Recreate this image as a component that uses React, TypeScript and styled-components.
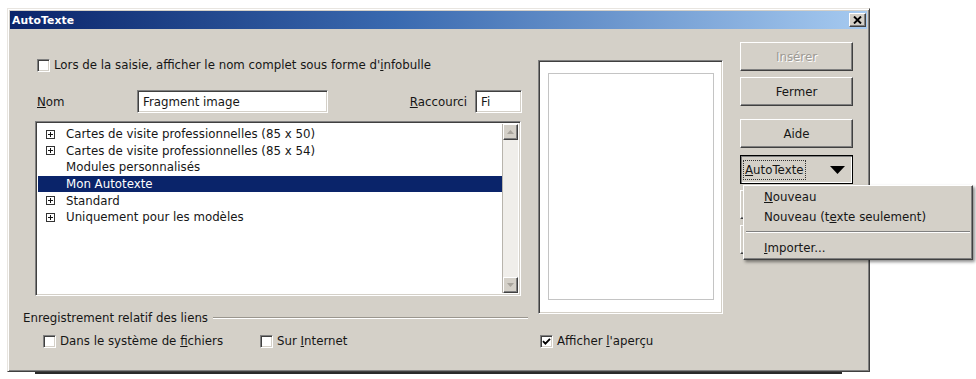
import React from 'react';
import styled, { createGlobalStyle, css } from 'styled-components';

const FACE = '#d4d0c8';
const FONT = `"DejaVu Sans", "Liberation Sans", Verdana, sans-serif`;

const GlobalStyle = createGlobalStyle`
  html, body { margin: 0; padding: 0; background: #fff; }
  body { font-family: ${FONT}; font-size: 11.8px; color: #161616; }
  * { box-sizing: border-box; }
`;

const raised = css`
  border: 1px solid;
  border-color: #fff #404040 #404040 #fff;
  box-shadow: inset -1px -1px #808080, inset 1px 1px ${FACE};
`;

const sunken = css`
  border: 1px solid;
  border-color: #808080 #fff #fff #808080;
  box-shadow: inset 1px 1px #404040, inset -1px -1px ${FACE};
`;

const Page = styled.div`
  width: 976px;
  height: 379px;
  overflow: hidden;
  padding: 8px 0 0 7px;
`;

const Window = styled.div`
  position: relative;
  width: 863px;
  height: 364px;
  background: ${FACE};
  border: 1px solid;
  border-color: #e8e5e0 #404040 #404040 #e8e5e0;
  box-shadow: inset 1px 1px #fff, inset -1px -1px #808080;
  padding: 2px;
  display: flex;
  flex-direction: column;
`;

const BehindEdge = styled.div`
  margin-left: 28px;
  width: 807px;
  height: 2px;
  background: #2a2a2a;
`;

const TitleBar = styled.div`
  height: 18px;
  display: flex;
  align-items: center;
  justify-content: space-between;
  padding: 0 1px 0 2px;
  background: linear-gradient(to right, #0a246a 0%, #3a6ab0 45%, #a6caf0 100%);
`;

const TitleText = styled.span`
  color: #fff;
  font-weight: bold;
  font-size: 10.8px;
  letter-spacing: 0.1px;
`;

const CloseButton = styled.div`
  width: 17px;
  height: 14px;
  background: ${FACE};
  ${raised};
  display: flex;
  align-items: center;
  justify-content: center;
`;

const Body = styled.div`
  flex: 1;
  display: flex;
  padding-left: 13px;
`;

const LeftCol = styled.div`
  width: 507px;
  padding-top: 29px;
  display: flex;
  flex-direction: column;
`;

const PreviewCol = styled.div`
  width: 185px;
  margin-left: 8px;
  padding-top: 31px;
  display: flex;
  flex-direction: column;
`;

const ButtonCol = styled.div`
  width: 113px;
  margin-left: 17px;
  padding-top: 13px;
  display: flex;
  flex-direction: column;
`;

const OptionRow = styled.div<{ $indent?: number; $top?: number }>`
  display: flex;
  align-items: center;
  height: 14px;
  margin-left: ${(p) => p.$indent ?? 0}px;
  margin-top: ${(p) => p.$top ?? 0}px;
`;

const Option = styled.label<{ $width?: number }>`
  display: flex;
  align-items: center;
  gap: 4px;
  width: ${(p) => (p.$width ? `${p.$width}px` : 'auto')};
  white-space: nowrap;
  line-height: 14px;
`;

const Box = styled.span`
  width: 13px;
  height: 13px;
  background: #fff;
  ${sunken};
  display: flex;
  align-items: center;
  justify-content: center;
  flex: none;
`;

const Key = styled.span`
  text-decoration: underline;
  text-underline-offset: 1px;
`;

const FieldRow = styled.div`
  margin: 18px 0 0 14px;
  width: 485px;
  height: 23px;
  display: flex;
  align-items: center;
`;

const FieldLabel = styled.span<{ $width?: number }>`
  width: ${(p) => (p.$width ? `${p.$width}px` : 'auto')};
  margin-right: ${(p) => (p.$width ? 0 : 8)}px;
  white-space: nowrap;
`;

const Spacer = styled.div`
  flex: 1;
`;

const TextInput = styled.div<{ $width: number }>`
  width: ${(p) => p.$width}px;
  height: 23px;
  background: #fff;
  ${sunken};
  padding: 0 5px;
  display: flex;
  align-items: center;
  white-space: nowrap;
`;

const ListBox = styled.div`
  margin: 8px 0 0 12px;
  width: 486px;
  height: 175px;
  background: #fff;
  ${sunken};
  padding: 2px;
  display: flex;
`;

const ListItems = styled.div`
  flex: 1;
  padding-top: 2px;
  display: flex;
  flex-direction: column;
`;

const ListItem = styled.div<{ $selected?: boolean }>`
  height: 16.6px;
  display: flex;
  align-items: center;
  white-space: nowrap;
  background: ${(p) => (p.$selected ? '#0a246a' : 'transparent')};
  color: ${(p) => (p.$selected ? '#fff' : 'inherit')};
`;

const ExpanderSlot = styled.span`
  width: 28px;
  flex: none;
  display: flex;
  align-items: center;
  padding-left: 8px;
`;

const Scrollbar = styled.div`
  width: 16px;
  display: flex;
  flex-direction: column;
  background: #f0eeea;
  border-left: 1px solid #b8b4ac;
`;

const ScrollArrow = styled.div`
  height: 16px;
  background: ${FACE};
  ${raised};
  display: flex;
  align-items: center;
  justify-content: center;
`;

const ScrollTrack = styled.div`
  flex: 1;
`;

const GroupHeader = styled.div`
  margin-top: 15px;
  width: 505px;
  height: 14px;
  display: flex;
  align-items: center;
  gap: 5px;
  white-space: nowrap;
`;

const EtchedLine = styled.div`
  flex: 1;
  height: 2px;
  border-top: 1px solid #9a968e;
  border-bottom: 1px solid #fff;
`;

const PreviewBox = styled.div`
  height: 254px;
  background: #fff;
  ${sunken};
  padding: 12px 8px 13px 9px;
  display: flex;
`;

const PreviewPage = styled.div`
  flex: 1;
  border: 1px solid #c4c4c4;
`;

const Button = styled.div<{ $top?: number; $disabled?: boolean }>`
  height: 29px;
  margin-top: ${(p) => p.$top ?? 0}px;
  background: ${FACE};
  ${raised};
  display: flex;
  align-items: center;
  justify-content: center;
  color: ${(p) => (p.$disabled ? '#9d9a94' : '#161616')};
  text-shadow: ${(p) => (p.$disabled ? '1px 1px #fff' : 'none')};
`;

const MenuButtonWrap = styled.div`
  position: relative;
  margin-top: 7px;
  height: 29px;
`;

const MenuButton = styled.div`
  height: 29px;
  background: ${FACE};
  border: 1px solid #000;
  box-shadow: inset 1px 1px #808080, inset -1px -1px #fff;
  display: flex;
  align-items: center;
  justify-content: space-between;
  padding: 0 7px 0 3px;
`;

const FocusLabel = styled.span`
  outline: 1px dotted #333;
  outline-offset: 0;
  padding: 2px 1px;
  line-height: 14px;
`;

const Menu = styled.div`
  position: absolute;
  z-index: 2;
  top: 30px;
  left: 3px;
  width: 230px;
  height: 75px;
  background: ${FACE};
  ${raised};
  box-shadow: inset -1px -1px #808080, inset 1px 1px ${FACE}, 2px 2px 3px rgba(0, 0, 0, 0.45);
  padding: 1px 0;
  display: flex;
  flex-direction: column;
`;

const MenuItem = styled.div`
  height: 20px;
  padding-left: 20px;
  display: flex;
  align-items: center;
  white-space: nowrap;
`;

const MenuSeparator = styled.div`
  margin: 4px 2px 5px;
  height: 2px;
  border-top: 1px solid #808080;
  border-bottom: 1px solid #fff;
`;

const CheckBox = ({ checked }: { checked?: boolean }) => (
  <Box>
    {checked && (
      <svg width="9" height="9" viewBox="0 0 9 9">
        <path d="M1 4.2 L3.4 6.6 L8 1.8" stroke="#000" strokeWidth="1.9" fill="none" />
      </svg>
    )}
  </Box>
);

const PlusBox = () => (
  <svg width="9" height="9" viewBox="0 0 9 9">
    <rect x="0.5" y="0.5" width="8" height="8" fill="#fff" stroke="#333" />
    <path d="M2 4.5 H7 M4.5 2 V7" stroke="#111" strokeWidth="1" />
  </svg>
);

const Arrow = ({ up }: { up?: boolean }) => (
  <svg width="7" height="4" viewBox="0 0 7 4">
    <path d={up ? 'M0 4 L3.5 0 L7 4 Z' : 'M0 0 L3.5 4 L7 0 Z'} fill="#a8a49c" />
  </svg>
);

const items: { label: string; expandable: boolean; selected?: boolean }[] = [
  { label: 'Cartes de visite professionnelles (85 x 50)', expandable: true },
  { label: 'Cartes de visite professionnelles (85 x 54)', expandable: true },
  { label: 'Modules personnalisés', expandable: false },
  { label: 'Mon Autotexte', expandable: false, selected: true },
  { label: 'Standard', expandable: true },
  { label: 'Uniquement pour les modèles', expandable: true },
];

export default function App() {
  return (
    <Page>
      <GlobalStyle />
      <Window>
        <TitleBar>
          <TitleText>AutoTexte</TitleText>
          <CloseButton>
            <svg width="9" height="8" viewBox="0 0 9 8">
              <path d="M1 0.5 L8 7.5 M8 0.5 L1 7.5" stroke="#000" strokeWidth="1.9" />
            </svg>
          </CloseButton>
        </TitleBar>
        <Body>
          <LeftCol>
            <OptionRow $indent={14}>
              <Option>
                <CheckBox />
                <span>
                  Lors de la saisie, afficher le nom complet sous forme d'<Key>i</Key>nfobulle
                </span>
              </Option>
            </OptionRow>
            <FieldRow>
              <FieldLabel $width={100}>
                <Key>N</Key>om
              </FieldLabel>
              <TextInput $width={191}>Fragment image</TextInput>
              <Spacer />
              <FieldLabel>
                <Key>R</Key>accourci
              </FieldLabel>
              <TextInput $width={47}>Fi</TextInput>
            </FieldRow>
            <ListBox>
              <ListItems>
                {items.map((it) => (
                  <ListItem key={it.label} $selected={it.selected}>
                    <ExpanderSlot>{it.expandable && <PlusBox />}</ExpanderSlot>
                    {it.label}
                  </ListItem>
                ))}
              </ListItems>
              <Scrollbar>
                <ScrollArrow>
                  <Arrow up />
                </ScrollArrow>
                <ScrollTrack />
                <ScrollArrow>
                  <Arrow />
                </ScrollArrow>
              </Scrollbar>
            </ListBox>
            <GroupHeader>
              <span>Enregistrement relatif des liens</span>
              <EtchedLine />
            </GroupHeader>
            <OptionRow $indent={20} $top={9}>
              <Option $width={217}>
                <CheckBox />
                <span>
                  Dans le système de <Key>f</Key>ichiers
                </span>
              </Option>
              <Option>
                <CheckBox />
                <span>
                  Sur <Key>I</Key>nternet
                </span>
              </Option>
            </OptionRow>
          </LeftCol>
          <PreviewCol>
            <PreviewBox>
              <PreviewPage />
            </PreviewBox>
            <OptionRow $indent={2} $top={20}>
              <Option>
                <CheckBox checked />
                <span>
                  Afficher <Key>l</Key>'aperçu
                </span>
              </Option>
            </OptionRow>
          </PreviewCol>
          <ButtonCol>
            <Button $disabled>Insérer</Button>
            <Button $top={6}>Fermer</Button>
            <Button $top={13}>Aide</Button>
            <MenuButtonWrap>
              <MenuButton>
                <FocusLabel>
                  <Key>A</Key>utoTexte
                </FocusLabel>
                <svg width="15" height="8" viewBox="0 0 15 8">
                  <path d="M0 0 H15 L7.5 8 Z" fill="#000" />
                </svg>
              </MenuButton>
              <Menu>
                <MenuItem>
                  <span>
                    <Key>N</Key>ouveau
                  </span>
                </MenuItem>
                <MenuItem>
                  <span>
                    Nouveau (t<Key>e</Key>xte seulement)
                  </span>
                </MenuItem>
                <MenuSeparator />
                <MenuItem>
                  <span>
                    <Key>I</Key>mporter...
                  </span>
                </MenuItem>
              </Menu>
            </MenuButtonWrap>
            <Button $top={6} aria-hidden />
            <Button $top={6} aria-hidden />
          </ButtonCol>
        </Body>
      </Window>
      <BehindEdge />
    </Page>
  );
}
